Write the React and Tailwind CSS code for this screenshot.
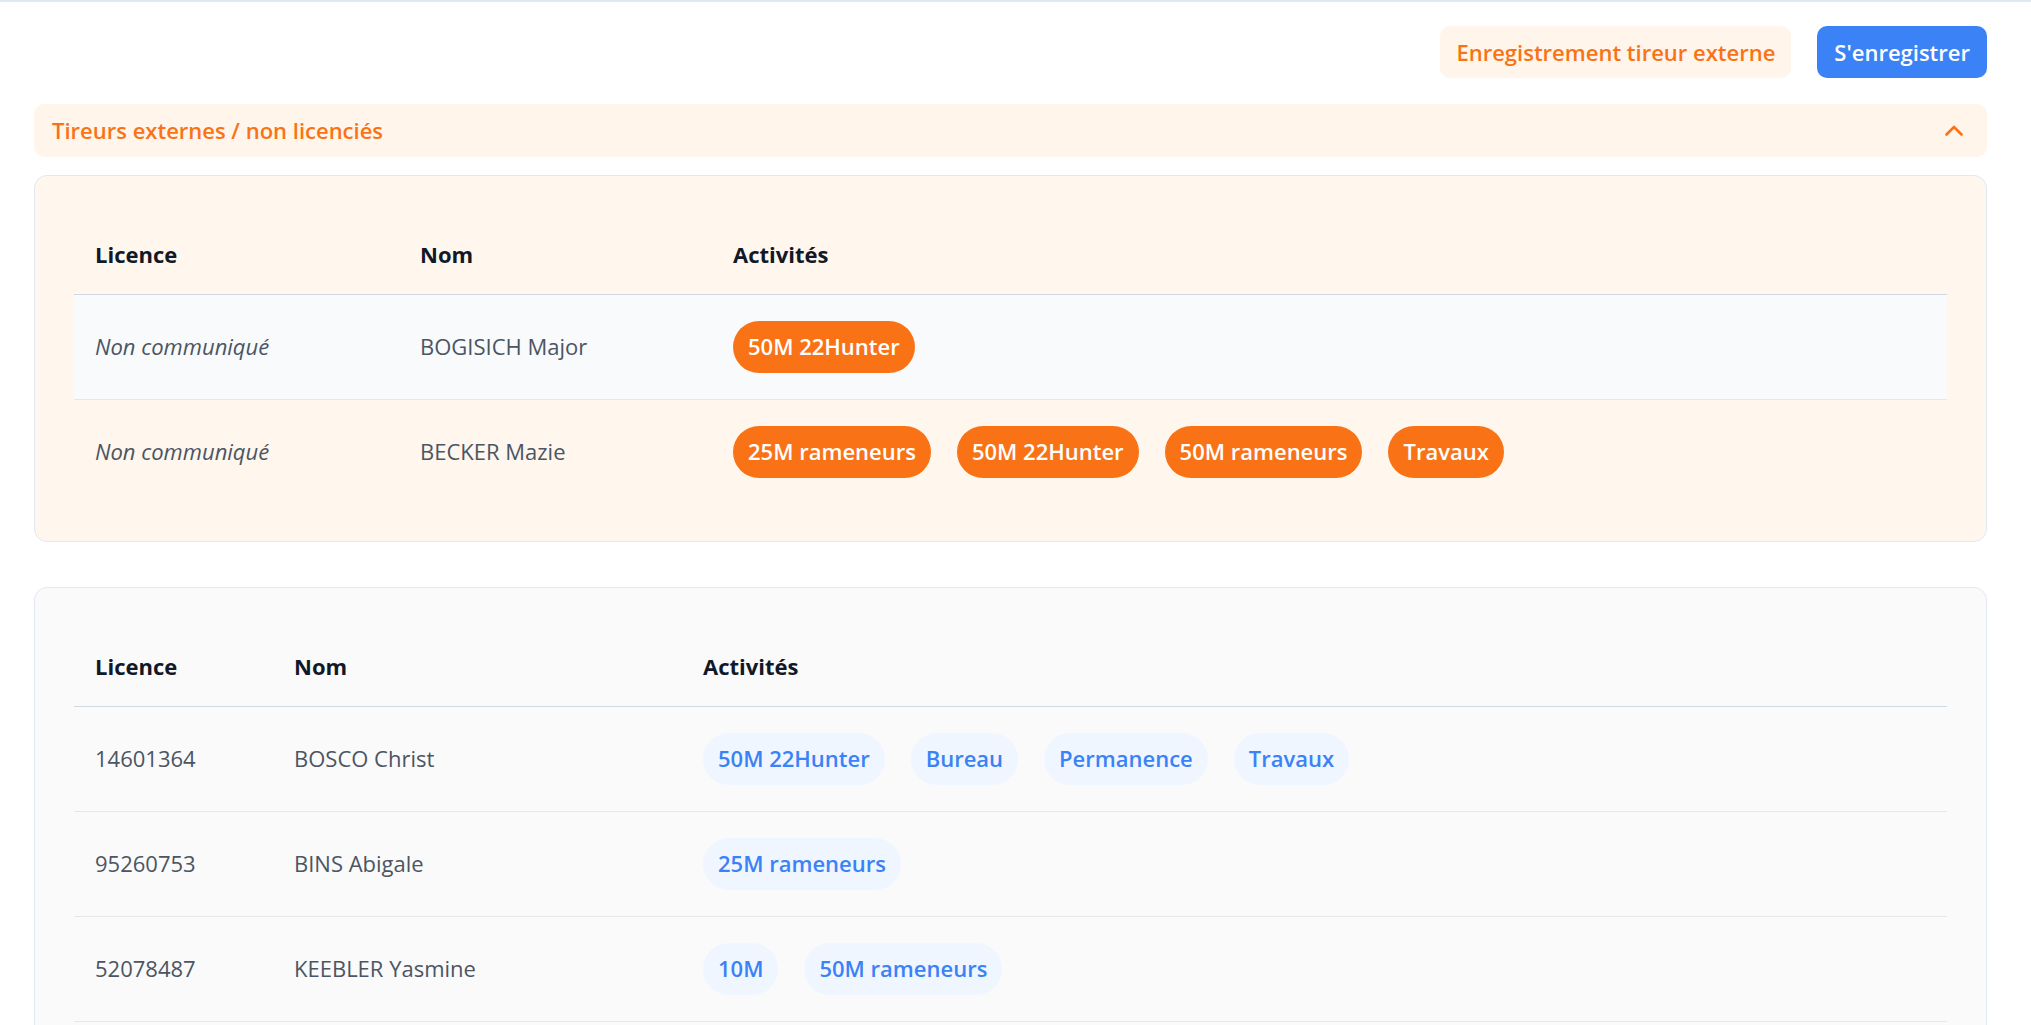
import { useState } from 'react'

const EXTERNES = [
  { licence: null, nom: 'BOGISICH Major', activites: ['50M 22Hunter'] },
  { licence: null, nom: 'BECKER Mazie', activites: ['25M rameneurs', '50M 22Hunter', '50M rameneurs', 'Travaux'] },
]

const MEMBRES = [
  { licence: '14601364', nom: 'BOSCO Christ', activites: ['50M 22Hunter', 'Bureau', 'Permanence', 'Travaux'] },
  { licence: '95260753', nom: 'BINS Abigale', activites: ['25M rameneurs'] },
  { licence: '52078487', nom: 'KEEBLER Yasmine', activites: ['10M', '50M rameneurs'] },
]

function Chevron({ open }) {
  return (
    <svg width="18" height="11" viewBox="0 0 18 11" fill="none" className={open ? '' : 'rotate-180'}>
      <polyline points="1.5,9.5 9,2 16.5,9.5" stroke="#f97316" strokeWidth="2.6" strokeLinecap="round" strokeLinejoin="round" />
    </svg>
  )
}

function Pill({ label, tone }) {
  const cls = tone === 'orange' ? 'bg-[#f97316] text-white' : 'bg-[#eff6ff] text-[#3b82f6]'
  return <span className={'h-[52px] px-[15px] rounded-full flex items-center font-semibold whitespace-nowrap ' + cls}>{label}</span>
}

// Tableau des tireurs : cols = largeurs des deux premieres colonnes
function ShooterTable({ rows, cols, tone, highlightFirst, lastBorder }) {
  return (
    <table className="w-full border-collapse text-left">
      <colgroup>
        <col style={{ width: cols[0] }} />
        <col style={{ width: cols[1] }} />
        <col />
      </colgroup>
      <thead>
        <tr className="border-b border-[#cfd8e3]">
          <th className="h-[79px] pl-[21px] font-bold text-[#111827]">Licence</th>
          <th className="h-[79px] pl-[21px] font-bold text-[#111827]">Nom</th>
          <th className="h-[79px] pl-[21px] font-bold text-[#111827]">Activités</th>
        </tr>
      </thead>
      <tbody>
        {rows.map((r, i) => {
          const last = i === rows.length - 1
          return (
            <tr key={r.nom} className={(highlightFirst && i === 0 ? 'bg-[#f8fafc] ' : '') + (!last || lastBorder ? 'border-b border-[#e5e7eb]' : '')}>
              <td className={'h-[105px] pl-[21px] text-[#4b5563] ' + (r.licence ? '' : 'italic')}>{r.licence || 'Non communiqué'}</td>
              <td className="h-[105px] pl-[21px] text-[#4b5563]">{r.nom}</td>
              <td className="h-[105px] pl-[21px]">
                <div className="flex items-center gap-[26px]">
                  {r.activites.map(a => <Pill key={a} label={a} tone={tone} />)}
                </div>
              </td>
            </tr>
          )
        })}
      </tbody>
    </table>
  )
}

export default function App() {
  const [open, setOpen] = useState(true)

  return (
    <div className="h-screen overflow-hidden bg-white border-t-2 border-[#e2e8f0] text-[22px] leading-[33px]" style={{ fontFamily: '"Open Sans", "Noto Sans", sans-serif' }}>
      <div className="pl-[34px] pr-[44px] pt-[24px]">
        <div className="flex justify-end gap-[26px]">
          <button className="h-[52px] px-[16px] rounded-[10px] bg-[#fff5eb] text-[#f97316] font-semibold">Enregistrement tireur externe</button>
          <button className="h-[52px] px-[17px] rounded-[10px] bg-[#3b82f6] text-white font-semibold">S'enregistrer</button>
        </div>

        <button onClick={() => setOpen(!open)} className="mt-[26px] w-full h-[53px] pl-[18px] pr-[24px] rounded-[10px] bg-[#fff5eb] flex items-center justify-between text-[#f97316] font-semibold">
          <span>Tireurs externes / non licenciés</span>
          <Chevron open={open} />
        </button>

        {open && (
          <div className="mt-[18px] rounded-[13px] border border-[#e2e8f0] bg-[#fff6ed] p-[39px] pb-[37px]">
            <ShooterTable rows={EXTERNES} cols={['325px', '313px']} tone="orange" highlightFirst />
          </div>
        )}

        <div className="mt-[45px] rounded-[13px] border border-[#e2e8f0] bg-[#fafafa] p-[39px]">
          <ShooterTable rows={MEMBRES} cols={['199px', '409px']} tone="blue" lastBorder />
        </div>
      </div>
    </div>
  )
}
